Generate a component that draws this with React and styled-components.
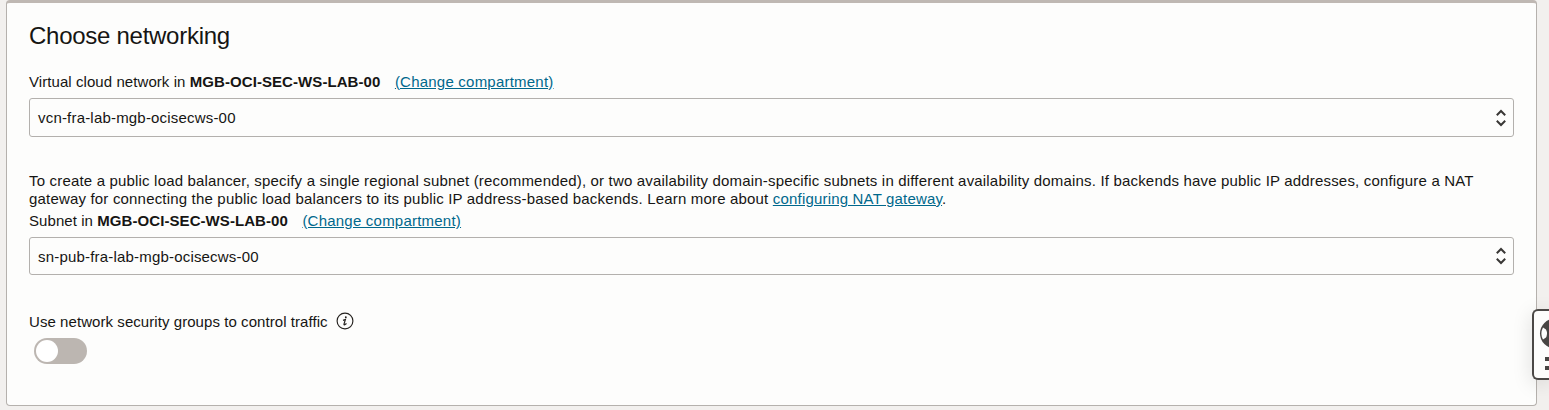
import React from "react";
import styled, { createGlobalStyle } from "styled-components";

const GlobalStyle = createGlobalStyle`
  *, *::before, *::after { box-sizing: border-box; }
  body {
    margin: 0;
    background: #f2f0ee;
    color: #161513;
    font-family: "Liberation Sans", Arial, sans-serif;
    font-size: 15px;
    line-height: 18px;
    overflow: hidden;
  }
`;

const Page = styled.main`
  height: 410px;
  padding: 0 12px 4px 6px;
`;

const Card = styled.section`
  height: 406px;
  padding: 18px 22px 0;
  background: #fdfdfc;
  border: 1px solid #b5b1ad;
  border-top: 3px solid #bfb8b3;
  border-radius: 4px;
`;

const Title = styled.h2`
  margin: 0;
  font-size: 24px;
  font-weight: 400;
  line-height: 30px;
  letter-spacing: -0.27px;
`;

const Field = styled.div`
  margin-top: ${({ $gap }) => $gap}px;
`;

const Label = styled.div`
  display: flex;
  white-space: pre;
  letter-spacing: 0.07px;
`;

const Link = styled.a`
  color: #00688c;
  text-decoration: underline;
  cursor: pointer;
`;

const ChangeLink = styled(Link)`
  margin-left: 14.5px;
  letter-spacing: 0.22px;
`;

const SelectBox = styled.div`
  display: flex;
  align-items: center;
  justify-content: space-between;
  height: ${({ $height }) => $height}px;
  margin-top: 7px;
  padding: 0 6px 0 8px;
  border: 1px solid #b3b0ad;
  border-radius: 3px;
`;

const Value = styled.span`
  height: 17px;
  letter-spacing: 0.19px;
`;

const Help = styled.p`
  margin: 35px 0 0;
  white-space: nowrap;
`;

const HelpLine = styled.span`
  display: block;
  letter-spacing: ${({ $spacing }) => $spacing}px;
`;

const ToggleLabel = styled.div`
  display: flex;
  align-items: flex-start;
  gap: 8px;
  height: 18px;
  margin-top: 38px;
  letter-spacing: 0.065px;

  svg { margin-top: -1px; }
`;

const Switch = styled.div`
  display: flex;
  align-items: center;
  width: 53px;
  height: 26px;
  margin: 7px 0 0 5px;
  padding: 2px;
  border-radius: 13px;
  background: #bcb6b1;
`;

const Knob = styled.span`
  width: 22px;
  height: 22px;
  border-radius: 50%;
  background: #fff;
`;

const SupportTab = styled.aside`
  position: absolute;
  top: 309px;
  right: 0;
  width: 17px;
  height: 71px;
  border: 2px solid #4b4846;
  border-right: 0;
  border-radius: 6px 0 0 6px;
  background: #fdfdfc;
  box-shadow: 0 4px 20px rgba(0, 0, 0, 0.13);
  overflow: hidden;
`;

const Chevrons = () => (
  <svg width="12" height="18" viewBox="0 0 12 18" fill="none" stroke="#393735" strokeWidth="2">
    <path d="M1.8 6.2 6 2l4.2 4.2M1.8 11.8 6 16l4.2-4.2" />
  </svg>
);

const InfoIcon = () => (
  <svg width="18" height="18" viewBox="0 0 18 18" fill="none" stroke="#25221f">
    <circle cx="9" cy="9" r="7.9" strokeWidth="1.15" />
    <path d="M7 8.4 9.4 7.5 8 12.2q-.2 1 .7.5l1.8-1.3" strokeWidth="1.2" />
    <circle cx="9.8" cy="5.2" r="0.95" fill="#25221f" stroke="none" />
  </svg>
);

const SupportIcon = () => (
  <svg width="15" height="67" viewBox="0 0 15 67" fill="#484543">
    <circle cx="21" cy="22.5" r="15" />
    <path d="M9 16.5 12 18.5Q14 22.5 12 26.5L9 28.5Q5.8 22.5 9 16.5Z" fill="#fdfdfc" />
    <path d="M11 46h4v4h-4zM11 55h4v4h-4z" />
  </svg>
);

const SelectField = ({ label, value, gap, height }) => (
  <Field $gap={gap}>
    <Label>
      {label} <strong>MGB-OCI-SEC-WS-LAB-00</strong>
      <ChangeLink>(Change compartment)</ChangeLink>
    </Label>
    <SelectBox $height={height}>
      <Value>{value}</Value>
      <Chevrons />
    </SelectBox>
  </Field>
);

export default function App() {
  return (
    <>
      <GlobalStyle />
      <Page>
        <Card>
          <Title>Choose networking</Title>
          <SelectField label="Virtual cloud network in" value="vcn-fra-lab-mgb-ocisecws-00" gap={22} height={39} />
          <Help>
            <HelpLine $spacing={0.178}>
              To create a public load balancer, specify a single regional subnet (recommended), or two availability domain-specific subnets in different availability domains. If backends have public IP addresses, configure a NAT
            </HelpLine>
            <HelpLine $spacing={0.182}>
              gateway for connecting the public load balancers to its public IP address-based backends. Learn more about <Link>configuring NAT gateway</Link>.
            </HelpLine>
          </Help>
          <SelectField label="Subnet in" value="sn-pub-fra-lab-mgb-ocisecws-00" gap={4} height={38} />
          <ToggleLabel>
            <span>Use network security groups to control traffic</span>
            <InfoIcon />
          </ToggleLabel>
          <Switch role="switch" aria-checked="false"><Knob /></Switch>
        </Card>
      </Page>
      <SupportTab><SupportIcon /></SupportTab>
    </>
  );
}
